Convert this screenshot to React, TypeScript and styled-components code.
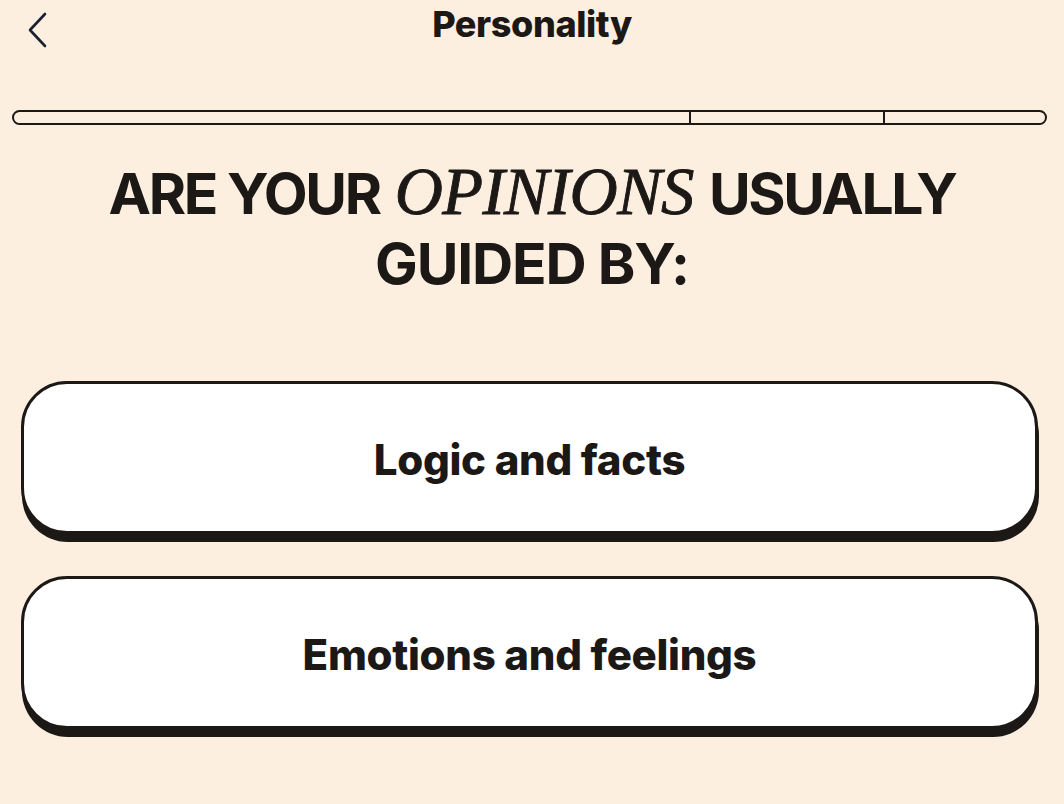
import React from "react";
import styled, { createGlobalStyle } from "styled-components";

const GlobalStyle = createGlobalStyle`
  html, body {
    margin: 0;
    padding: 0;
    background-color: #fcefe0;
  }
  body {
    font-family: Inter, "Noto Sans", "Liberation Sans", sans-serif;
    color: #1c1816;
  }
`;

const Page = styled.div`
  min-height: 100vh;
  background-color: #fcefe0;
  display: flex;
  flex-direction: column;
`;

const Header = styled.header`
  position: relative;
  height: 52px;
  display: flex;
  align-items: center;
  justify-content: center;
`;

const BackButton = styled.button`
  position: absolute;
  left: 24px;
  top: 10px;
  width: 26px;
  height: 40px;
  padding: 0;
  border: none;
  background: transparent;
  cursor: pointer;
  display: flex;
  align-items: center;
  justify-content: center;
`;

const Title = styled.h1`
  margin: 0;
  margin-top: -4px;
  font-size: 36px;
  font-weight: 800;
  letter-spacing: -0.4px;
`;

const Track = styled.div`
  display: flex;
  margin: 58px 17px 0 12px;
  height: 15px;
  box-sizing: border-box;
  border: 2px solid #1c1816;
  border-radius: 8px;
  overflow: hidden;
`;

const Segment = styled.div<{ $grow: number; $first?: boolean }>`
  flex: ${(p) => p.$grow} 1 0;
  border-left: ${(p) => (p.$first ? "none" : "2px solid #1c1816")};
`;

const Question = styled.h2`
  margin: 32px 0 0;
  text-align: center;
  font-size: 57px;
  line-height: 70px;
  font-weight: 700;
  letter-spacing: -2.4px;
  text-transform: uppercase;
`;

const SecondLine = styled.span`
  letter-spacing: -1.2px;
`;

const Accent = styled.em`
  display: inline-block;
  margin: 0 4px;
  font-family: "Liberation Serif", "DejaVu Serif", serif;
  font-style: italic;
  font-weight: 400;
  font-size: 1.17em;
  line-height: 70px;
  letter-spacing: -0.6px;
  -webkit-text-stroke: 0.9px #1c1816;
`;

const Options = styled.div`
  display: flex;
  flex-direction: column;
  gap: 42px;
  margin: 82px 26px 0 21px;
`;

const OptionButton = styled.button`
  height: 153px;
  padding-top: 4px;
  box-sizing: border-box;
  border: 3px solid #1c1816;
  border-radius: 46px;
  background: #ffffff;
  box-shadow: 1px 8px 0 #1c1816;
  font-family: Inter, "Noto Sans", sans-serif;
  font-size: 42px;
  font-weight: 800;
  letter-spacing: -0.3px;
  color: #1c1816;
  cursor: pointer;
`;

const options = ["Logic and facts", "Emotions and feelings"];

export default function App() {
  return (
    <Page>
      <GlobalStyle />
      <Header>
        <BackButton aria-label="Back">
          <svg width="20" height="36" viewBox="0 0 20 36" fill="none">
            <path
              d="M18 2 L3 18 L18 34"
              stroke="#1b2030"
              strokeWidth="2.6"
              strokeLinecap="round"
              strokeLinejoin="round"
            />
          </svg>
        </BackButton>
        <Title>Personality</Title>
      </Header>

      <Track>
        <Segment $grow={680} $first />
        <Segment $grow={194} />
        <Segment $grow={161} />
      </Track>

      <Question>
        Are your <Accent>opinions</Accent> usually
        <br />
        <SecondLine>guided by:</SecondLine>
      </Question>

      <Options>
        {options.map((label) => (
          <OptionButton key={label}>{label}</OptionButton>
        ))}
      </Options>
    </Page>
  );
}
